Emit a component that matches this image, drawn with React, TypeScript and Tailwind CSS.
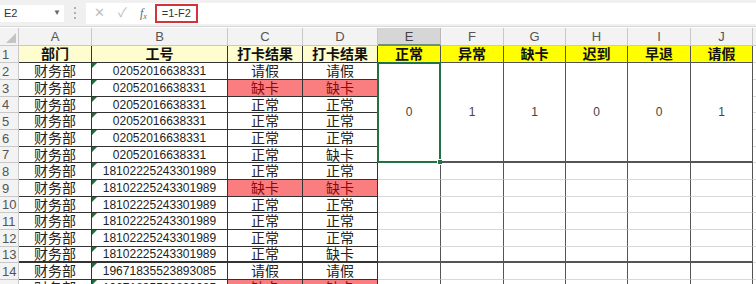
import { ReactNode } from 'react'

const rows = [
  { n: 2, b: '02052016638331', c: '请假', d: '请假' },
  { n: 3, b: '02052016638331', c: '缺卡', d: '缺卡' },
  { n: 4, b: '02052016638331', c: '正常', d: '正常' },
  { n: 5, b: '02052016638331', c: '正常', d: '正常' },
  { n: 6, b: '02052016638331', c: '正常', d: '正常' },
  { n: 7, b: '02052016638331', c: '正常', d: '缺卡' },
  { n: 8, b: '18102225243301989', c: '正常', d: '正常' },
  { n: 9, b: '18102225243301989', c: '缺卡', d: '缺卡' },
  { n: 10, b: '18102225243301989', c: '正常', d: '正常' },
  { n: 11, b: '18102225243301989', c: '正常', d: '正常' },
  { n: 12, b: '18102225243301989', c: '正常', d: '正常' },
  { n: 13, b: '18102225243301989', c: '正常', d: '缺卡' },
  { n: 14, b: '19671835523893085', c: '请假', d: '请假' },
  { n: 15, b: '19671835523893085', c: '缺卡', d: '缺卡' },
]

const headers = ['A', 'B', 'C', 'D', 'E', 'F', 'G', 'H', 'I', 'J']
const summary = [
  { label: '正常', value: 0 },
  { label: '异常', value: 1 },
  { label: '缺卡', value: 1 },
  { label: '迟到', value: 0 },
  { label: '早退', value: 0 },
  { label: '请假', value: 1 },
]

function RowHead({ n }: { n: number }) {
  return (
    <div className="flex items-center border-r border-b border-[#c8c8c8] bg-[#f3f3f3] pl-[2px] text-[13px] leading-none text-[#555]">
      {n}
    </div>
  )
}

function Status({ text, thick, red }: { text: string; thick: boolean; red: boolean }) {
  return (
    <div
      className={`flex items-center justify-center border-r border-[#333] text-[14px] leading-none ${
        thick ? 'border-b-2' : 'border-b'
      } ${red ? 'bg-[#fa7e80] text-[#8a0a0a]' : 'bg-white text-[#222]'}`}
    >
      {text}
    </div>
  )
}

function Cell({ children, className }: { children?: ReactNode; className: string }) {
  return <div className={className}>{children}</div>
}

export default function App() {
  return (
    <div className="relative h-[284px] w-[756px] overflow-hidden bg-white font-['Liberation_Sans','Noto_Sans_CJK_SC',sans-serif]">
      {/* formula bar */}
      <div className="flex h-[27px] items-center border-b border-[#d8d8d8] bg-[#f0f0f0]">
        <div className="flex h-[17px] w-[64px] items-center justify-between bg-white pl-[4px] pr-[3px] text-[11px] text-[#333]">
          <span>E2</span>
          <span className="text-[8px] text-[#666]">▼</span>
        </div>
        <div className="ml-[10px] flex h-[12px] w-[3px] flex-col justify-between">
          <span className="h-[2px] w-[2px] bg-[#b0b0b0]" />
          <span className="h-[2px] w-[2px] bg-[#b0b0b0]" />
          <span className="h-[2px] w-[2px] bg-[#b0b0b0]" />
        </div>
        <div className="ml-[9px] flex h-[21px] flex-1 items-center bg-white">
          <span className="ml-[8px] text-[13px] text-[#bdbdbd]">✕</span>
          <span className="ml-[13px] text-[13px] text-[#bdbdbd]">✓</span>
          <span className="ml-[13px] font-['Liberation_Serif',serif] text-[12px] italic text-[#666]">
            f<sub className="text-[8px]">x</sub>
          </span>
          <div className="ml-[8px] flex h-[19px] w-[43px] items-center border-2 border-[#d2343c] pl-[5px] text-[11px] text-[#333]">
            =1-F2
          </div>
        </div>
      </div>

      {/* sheet */}
      <div className="mt-px grid grid-cols-[19px_73px_136px_75px_75px_63px_63px_62px_62px_63px_62px_3px] grid-rows-[18px_17px_17px_17px_16px_17px_17px_16px_17px_17px_16px_17px_17px_16px_17px_17px]">
        {/* column headers */}
        <div className="relative border-r border-b border-[#c8c8c8] bg-[#f3f3f3]">
          <div className="absolute right-[2px] bottom-[2px] h-0 w-0 border-b-[10px] border-l-[10px] border-b-[#c4c4c4] border-l-transparent" />
        </div>
        {headers.map((h) => (
          <Cell
            key={h}
            className={`flex items-center justify-center border-r text-[13px] leading-none ${
              h === 'E'
                ? 'border-b-2 border-r-[#b8b8b8] border-b-[#6f8f7c] bg-[#d6d6d6] text-[#444]'
                : 'border-b border-[#c8c8c8] bg-[#f3f3f3] text-[#555]'
            }`}
          >
            {h}
          </Cell>
        ))}
        <div className="border-b border-[#c8c8c8] bg-[#f3f3f3]" />

        {/* row 1 */}
        <RowHead n={1} />
        {['部门', '工号', '打卡结果', '打卡结果'].map((t, i) => (
          <Cell
            key={i}
            className="flex items-center justify-center border-r border-b border-[#333] bg-[#fdfdcf] text-[14px] font-semibold leading-none text-[#111]"
          >
            {t}
          </Cell>
        ))}
        {summary.map((s) => (
          <Cell
            key={s.label}
            className="flex items-center justify-center border-r border-b border-[#555] bg-[#ffff00] text-[14px] font-bold leading-none text-[#111]"
          >
            {s.label}
          </Cell>
        ))}
        <div className="border-b border-[#dcdcdc]" />

        {rows.map((r) => {
          const thick = r.n === 13
          const red = r.c === '缺卡'
          return [
            <RowHead key={`h${r.n}`} n={r.n} />,
            <Cell
              key={`a${r.n}`}
              className={`flex items-center justify-center border-r border-[#333] text-[14px] leading-none text-[#222] ${
                thick ? 'border-b-2' : 'border-b'
              }`}
            >
              财务部
            </Cell>,
            <Cell
              key={`b${r.n}`}
              className={`relative flex items-center justify-center border-r border-[#333] text-[12px] leading-none text-[#222] ${
                thick ? 'border-b-2' : 'border-b'
              }`}
            >
              <div className="absolute top-0 left-0 h-0 w-0 border-t-[5px] border-r-[5px] border-t-[#1f6e3d] border-r-transparent" />
              {r.b}
            </Cell>,
            <Status key={`c${r.n}`} text={r.c} thick={thick} red={red} />,
            <Status key={`d${r.n}`} text={r.d} thick={thick} red={red} />,
            ...(r.n === 2
              ? summary.map((s, i) => (
                  <Cell
                    key={`m${i}`}
                    className="relative row-span-6 flex items-center justify-center border-r border-b-2 border-[#555] text-[12px] text-[#444]"
                  >
                    {i === 0 && (
                      <div className="absolute -top-px -left-px -right-px -bottom-[2px] border-2 border-[#217346]">
                        <div className="absolute -right-[4px] -bottom-[4px] h-[6px] w-[6px] border border-white bg-[#217346]" />
                      </div>
                    )}
                    {s.value}
                  </Cell>
                ))
              : r.n >= 8
              ? summary.map((s, i) => (
                  <Cell
                    key={`e${r.n}${i}`}
                    className={`border-r border-r-[#555] ${
                      r.n === 13 ? 'border-b-2 border-b-[#555]' : 'border-b border-b-[#d8d8d8]'
                    }`}
                  />
                ))
              : []),
            <div key={`k${r.n}`} className="border-b border-[#dcdcdc]" />,
          ]
        })}
      </div>
    </div>
  )
}
